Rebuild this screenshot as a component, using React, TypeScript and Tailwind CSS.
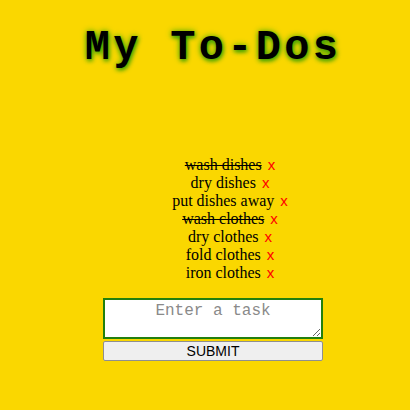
import React, { useState } from "react";

type Todo = { text: string; done: boolean };

const initial: Todo[] = [
  { text: "wash dishes", done: true },
  { text: "dry dishes", done: false },
  { text: "put dishes away", done: false },
  { text: "wash clothes", done: true },
  { text: "dry clothes", done: false },
  { text: "fold clothes", done: false },
  { text: "iron clothes", done: false },
];

const App = () => {
  const [todos, setTodos] = useState<Todo[]>(initial);
  const [task, setTask] = useState("");

  return (
    <div className="min-h-[410px] w-full bg-[#fad700] pl-[16px] flex flex-col items-center">
      <h1
        className="mt-[26px] text-[42px] leading-[44px] tracking-[3.3px] font-bold text-black font-['Courier_New','Liberation_Mono',monospace]"
        style={{ textShadow: "1px 2px 4px #3a9e00, 0 0 6px #5cb300" }}
      >
        My To-Dos
      </h1>

      <ul className="mt-[86px] pl-[34px] flex flex-col items-center font-['Times_New_Roman','Liberation_Serif',serif] text-[16px] leading-[18px] text-black">
        {todos.map((t, i) => (
          <li key={i}>
            <span className={t.done ? "line-through" : ""}>{t.text}</span>{" "}
            <span
              className="ml-[2px] text-[#ff0000] font-['Liberation_Sans',sans-serif] text-[15px] cursor-pointer"
              onClick={() => setTodos(todos.filter((_, j) => j !== i))}
            >
              x
            </span>
          </li>
        ))}
      </ul>

      <div className="mt-[16px] w-[220px] flex flex-col">
        <textarea
          value={task}
          onChange={(e) => setTask(e.target.value)}
          placeholder="Enter a task"
          className="h-[41px] w-full bg-white border-2 border-[#22800e] text-center text-[16px] leading-[18px] pt-[2px] font-['Courier_New','Liberation_Mono',monospace] placeholder:text-[#8a8a8a] outline-none"
        />
        <button
          className="mt-[2px] h-[20px] w-full bg-[#efefef] border border-[#8f8f8f] rounded-[2px] text-[14px] leading-[16px] text-black font-['Liberation_Sans',Arial,sans-serif]"
          onClick={() => {
            if (task.trim()) {
              setTodos([...todos, { text: task.trim(), done: false }]);
              setTask("");
            }
          }}
        >
          SUBMIT
        </button>
      </div>
    </div>
  );
};

export default App;
